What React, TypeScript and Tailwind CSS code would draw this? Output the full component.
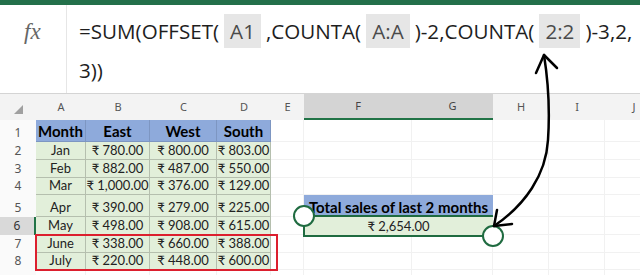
import React from "react";

const colLetters = ["A", "B", "C", "D", "E", "F", "G", "H", "I", "J"];

const data = [
  ["Jan", "₹ 780.00", "₹ 800.00", "₹ 803.00"],
  ["Feb", "₹ 882.00", "₹ 487.00", "₹ 550.00"],
  ["Mar", "₹ 1,000.00", "₹ 376.00", "₹ 129.00"],
  ["Apr", "₹ 390.00", "₹ 279.00", "₹ 225.00"],
  ["May", "₹ 498.00", "₹ 908.00", "₹ 615.00"],
  ["June", "₹ 338.00", "₹ 660.00", "₹ 388.00"],
  ["July", "₹ 220.00", "₹ 448.00", "₹ 600.00"],
];

function RefBox({ children }: { children: React.ReactNode }) {
  return (
    <span className="mx-[5px] flex h-[34px] items-center bg-[#e6e6e6] px-[6px] text-[#4a4a4a]">
      {children}
    </span>
  );
}

function FormulaBar() {
  return (
    <div className="flex h-[89px] border-b border-[#d4d4d4] bg-white">
      <div className="w-[67px] shrink-0 border-r border-[#e6e6e6] pl-[24px] pt-[10px] font-['Liberation_Serif',serif] text-[23px] italic text-[#666]">
        fx
      </div>
      <div className="flex-1 pl-[12px] font-['Open_Sans',sans-serif] text-[20.6px] text-[#1e1e1e]">
        <div className="mt-[9px] flex h-[34px] items-center whitespace-nowrap">
          <span>=SUM(OFFSET(</span>
          <RefBox>A1</RefBox>
          <span>,COUNTA(</span>
          <RefBox>A:A</RefBox>
          <span>)-2,COUNTA(</span>
          <RefBox>2:2</RefBox>
          <span>)-3,2,</span>
        </div>
        <div className="mt-[8px] leading-[28px]">3))</div>
      </div>
    </div>
  );
}

function Sheet() {
  const rows = [1, 2, 3, 4, 5, 6, 7, 8, 9];
  const blank = "border-r border-b border-[#f1f1f1]";
  const font = "font-['Lato','Noto_Sans',sans-serif] whitespace-nowrap";
  const cells: React.ReactNode[] = [];

  // column header row
  cells.push(
    <div key="corner" className="flex items-end justify-center bg-[#f3f3f3] pb-[6px]">
      <svg width="9" height="9" viewBox="0 0 9 9">
        <path d="M9 0 L9 9 L0 9 Z" fill="#a0a0a0" />
      </svg>
    </div>
  );
  colLetters.forEach((c) => {
    if (c === "G") return;
    if (c === "F") {
      cells.push(
        <div key={c} className="col-span-2 flex border-b-2 border-[#217346] bg-[#d4d4d4] text-[#444]">
          <div className="flex w-[108px] items-center justify-center">F</div>
          <div className="flex w-[81px] items-center justify-center">G</div>
        </div>
      );
      return;
    }
    cells.push(
      <div key={c} className="flex items-center justify-center bg-[#f3f3f3] text-[#555]">
        {c}
      </div>
    );
  });

  rows.forEach((r) => {
    const active = r === 6;
    cells.push(
      <div
        key={"rh" + r}
        className={`flex items-end justify-center pb-[1px] text-[12px] leading-[16px] ${
          active ? "border-r-2 border-[#217346] bg-[#d9d9d9] text-[#333]" : "bg-[#fafafa] text-[#555]"
        }`}
      >
        {r < 9 ? r : ""}
      </div>
    );
    for (let c = 0; c < 10; c++) {
      const key = r + "-" + c;
      if (c < 4 && r === 1) {
        cells.push(
          <div
            key={key}
            className={`${font} flex items-end justify-center overflow-hidden border-r border-b border-[#7d96c2] bg-[#8eaadb] text-[15px] font-bold leading-[20px] text-black`}
          >
            {["Month", "East", "West", "South"][c]}
          </div>
        );
      } else if (c < 4 && r <= 8) {
        cells.push(
          <div
            key={key}
            className={`${font} flex items-end justify-center overflow-hidden border-r border-b border-[#b5bfae] bg-[#e2efda] text-[13px] leading-[17px] text-[#222]`}
          >
            {data[r - 2][c]}
          </div>
        );
      } else if (c === 5 && r === 5) {
        cells.push(
          <div
            key={key}
            className={`${font} col-span-2 flex items-end justify-center bg-[#8eaadb] text-[15px] font-bold leading-[20px] text-black`}
          >
            Total sales of last 2 months
          </div>
        );
      } else if (c === 5 && r === 6) {
        cells.push(
          <div
            key={key}
            className={`${font} col-span-2 flex items-center justify-center bg-[#e2efda] text-[13px] leading-[17px] text-[#222]`}
          >
            ₹ 2,654.00
          </div>
        );
      } else if (c === 6 && (r === 5 || r === 6)) {
        continue;
      } else {
        cells.push(<div key={key} className={blank} />);
      }
    }
  });

  return (
    <div className="grid grid-cols-[36px_50px_64px_67px_54px_33px_108px_81px_56px_56px_58px] grid-rows-[26px_22px_18px_18px_17px_22px_18px_18px_17px_18px] font-['Noto_Sans',sans-serif] text-[11px]">
      {cells}
    </div>
  );
}

export default function App() {
  return (
    <div className="relative h-[275px] w-[640px] overflow-hidden bg-white">
      <div className="h-[5px] bg-[#23704a]" />
      <FormulaBar />
      <Sheet />

      {/* highlight of the last two months */}
      <div className="pointer-events-none absolute left-[35px] top-[234px] h-[37px] w-[243px] border-2 border-[#dc1f2e]" />

      {/* selection and arrow drawn over the grid */}
      <svg className="pointer-events-none absolute left-0 top-0" width="640" height="275" viewBox="0 0 640 275">
        <path d="M304 216 L304 236 L493 236 M304 216 L493 216" stroke="#1f6b40" strokeWidth="2" fill="none" />
        <circle cx="304" cy="216" r="10" fill="white" stroke="#1f6b40" strokeWidth="2" />
        <circle cx="493" cy="236" r="10" fill="white" stroke="#1f6b40" strokeWidth="2" />
        <path
          d="M544 55 C548 80 550 110 548 140 C546 175 525 205 494 226"
          stroke="black"
          strokeWidth="2.5"
          fill="none"
          strokeLinecap="round"
        />
        <path d="M536 73 L544 55 L557 68" stroke="black" strokeWidth="2.5" fill="none" strokeLinecap="round" strokeLinejoin="round" />
        <path d="M497 210 L494 226 L512 224" stroke="black" strokeWidth="2.5" fill="none" strokeLinecap="round" strokeLinejoin="round" />
      </svg>
    </div>
  );
}
